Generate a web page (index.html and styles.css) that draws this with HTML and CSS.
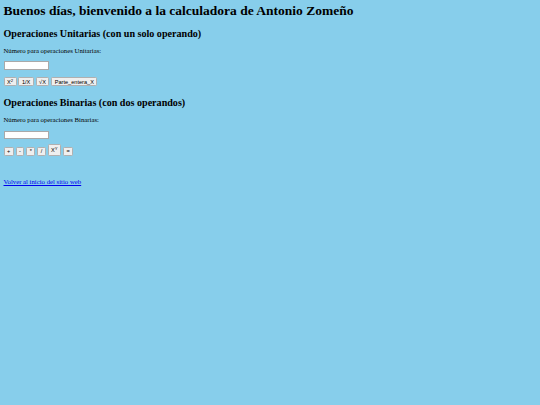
FILE: index.html
```html
<!DOCTYPE html>
<html lang="es">
<head>
<meta charset="utf-8">
<title>Calculadora</title>
<link rel="stylesheet" href="styles.css">
</head>
<body>
<h1 class="title">Buenos días, bienvenido a la calculadora de Antonio Zomeño</h1>
<h2 class="section first">Operaciones Unitarias (con un solo operando)</h2>
<p class="label">Número para operaciones Unitarias:</p>
<div class="field"><input class="num" type="text"></div>
<div class="keys">
<button class="key">X<sup>2</sup></button>
<button class="key">1/X</button>
<button class="key">√X</button>
<button class="key">Parte_entera_X</button>
</div>
<h2 class="section second">Operaciones Binarias (con dos operandos)</h2>
<p class="label">Número para operaciones Binarias:</p>
<div class="field"><input class="num" type="text"></div>
<div class="keys bin">
<button class="key">+</button>
<button class="key">-</button>
<button class="key">*</button>
<button class="key">/</button>
<button class="key tall">X<sup>Y</sup></button>
<button class="key">=</button>
</div>
<p class="back"><a class="link" href="#">Volver al inicio del sitio web</a></p>
</body>
</html>
```
FILE: styles.css
```css
html, body {
  background: #87ceeb;
}
body {
  margin: 0;
  padding: 0 3.5px;
  font-family: "Liberation Serif", "Times New Roman", serif;
  font-size: 6.75px;
  color: #000;
}
.title {
  margin: 3px 0 0;
  font-size: 13.5px;
  line-height: 15.5px;
  font-weight: bold;
}
.section {
  margin: 9px 0 0;
  font-size: 10.1px;
  line-height: 11.5px;
  font-weight: bold;
}
.section.second {
  margin-top: 10.5px;
}
.label {
  margin: 8px 0 0;
  font-size: 6.75px;
  line-height: 8px;
}
.field {
  margin-top: 6.3px;
}
.num {
  display: block;
  box-sizing: border-box;
  width: 45px;
  height: 8.5px;
  margin: 0;
  padding: 0;
  border: 1px solid #a9a9a9;
  background: #fff;
}
.keys {
  display: flex;
  align-items: flex-end;
  gap: 1.8px;
  margin-top: 7.5px;
}
.keys.bin {
  margin-top: 5px;
}
.key {
  box-sizing: border-box;
  height: 9px;
  margin: 0;
  padding: 0 2.5px;
  font-family: "Liberation Sans", Arial, sans-serif;
  font-size: 5.6px;
  line-height: 6px;
  color: #000;
  background: #efefef;
  border: 0.8px solid #b0b0b0;
  border-radius: 1.3px;
}
.key sup {
  font-size: 4.2px;
  line-height: 0;
  vertical-align: 2px;
}
.key.tall {
  height: 11.5px;
}
.back {
  margin: 22.5px 0 0;
  font-size: 6.75px;
  line-height: 8px;
}
.link {
  color: #0000ee;
  text-decoration: underline;
}
```
